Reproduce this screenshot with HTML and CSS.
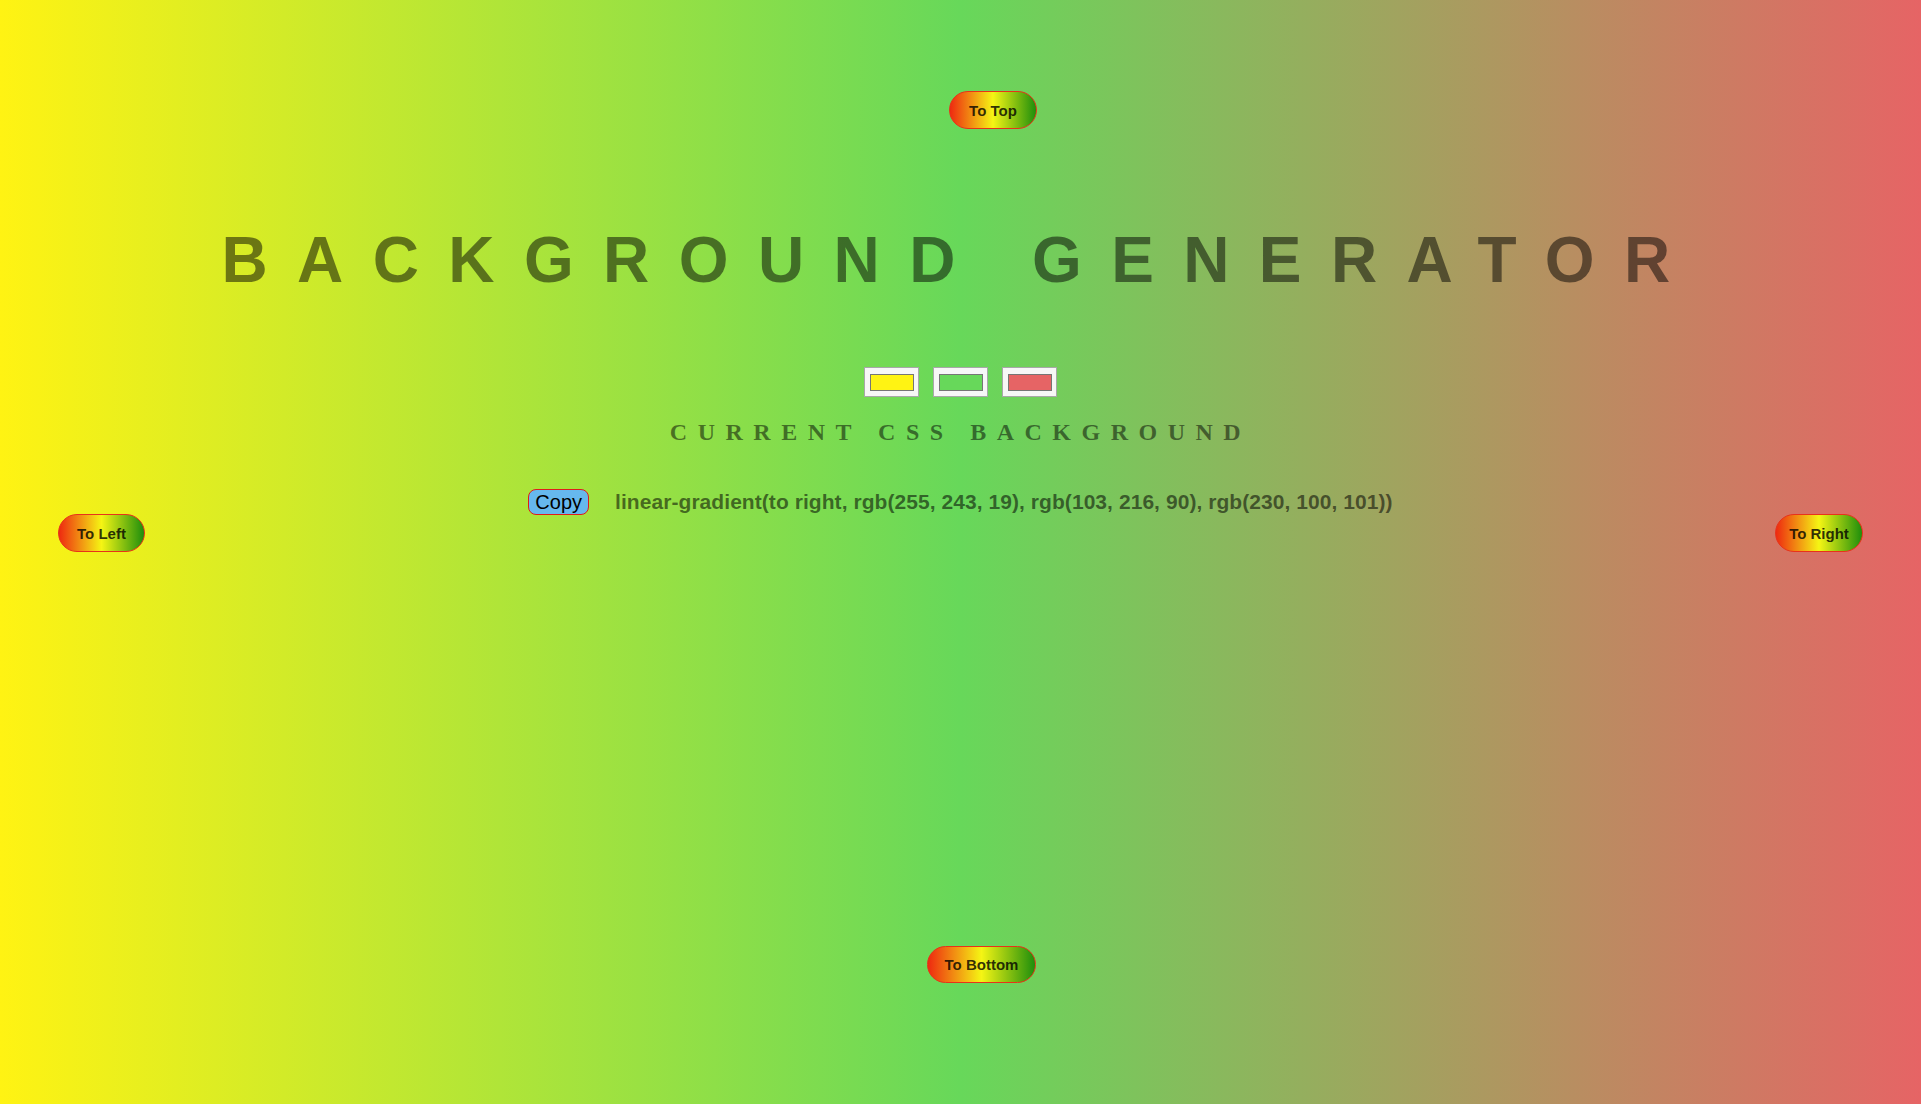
FILE: index.html
```html
<!DOCTYPE html>
<html lang="en">
<head>
<meta charset="utf-8">
<title>Background Generator</title>
<link rel="stylesheet" href="styles.css">
</head>
<body class="page">
  <div class="vnav vnav-top">
    <button class="dir-btn dir-top" type="button">To Top</button>
  </div>

  <h1 class="title">BACKGROUND GENERATOR</h1>

  <div class="swatches">
    <input class="swatch" type="color" value="#fff313">
    <input class="swatch" type="color" value="#67d85a">
    <input class="swatch" type="color" value="#e66465">
  </div>

  <h3 class="subtitle">CURRENT CSS BACKGROUND</h3>

  <div class="copy-row">
    <button class="copy-btn" type="button">Copy</button>
    <span class="css-value">linear-gradient(to right, rgb(255, 243, 19), rgb(103, 216, 90), rgb(230, 100, 101))</span>
  </div>

  <div class="hnav">
    <button class="dir-btn dir-left" type="button">To Left</button>
    <button class="dir-btn dir-right" type="button">To Right</button>
  </div>

  <div class="vnav vnav-bottom">
    <button class="dir-btn dir-bottom" type="button">To Bottom</button>
  </div>
</body>
</html>
```
FILE: styles.css
```css
html, body {
  margin: 0;
  padding: 0;
}

.page {
  min-height: 1104px;
  box-sizing: border-box;
  background: linear-gradient(to right, rgb(255, 243, 19), rgb(103, 216, 90), rgb(230, 100, 101));
  display: flex;
  flex-direction: column;
  align-items: center;
  font-family: "Liberation Sans", Arial, sans-serif;
}

.vnav {
  width: 153px;
  display: flex;
  justify-content: flex-end;
}

.vnav-top {
  padding-top: 91px;
}

.vnav-bottom {
  margin-top: 394px;
}

.dir-btn {
  box-sizing: border-box;
  height: 38px;
  padding: 0;
  border: 1px solid #e8321a;
  border-radius: 19px;
  background: linear-gradient(to right, #ee2a10, #f5f514, #1e8e0c);
  color: rgba(0, 0, 0, 0.8);
  font-family: "Liberation Sans", Arial, sans-serif;
  font-weight: bold;
  font-size: 15px;
  cursor: pointer;
}

.dir-top { width: 88px; }
.dir-left { width: 87px; }
.dir-right { width: 88px; }
.dir-bottom { width: 109px; height: 37px; margin-right: 1px; }

.title {
  margin: 99px 0 0 0;
  font-size: 64px;
  line-height: 64px;
  font-weight: bold;
  letter-spacing: 29.4px;
  color: rgba(0, 0, 0, 0.5);
  white-space: nowrap;
}

.swatches {
  margin-top: 75px;
  display: flex;
  gap: 14px;
}

.swatch {
  -webkit-appearance: none;
  appearance: none;
  box-sizing: border-box;
  width: 55px;
  height: 30px;
  margin: 0;
  padding: 0;
  border: 1px solid #a8a8a8;
  background: #f7f7f7;
  cursor: pointer;
}

.swatch::-webkit-color-swatch-wrapper {
  padding: 6px 4px 5px 5px;
}

.swatch::-webkit-color-swatch {
  border: 1px solid #767676;
  border-radius: 0;
}

.subtitle {
  margin: 23px 0 0 0;
  font-family: "Liberation Serif", "Times New Roman", serif;
  font-size: 24px;
  line-height: 24px;
  font-weight: bold;
  letter-spacing: 10.5px;
  color: rgba(0, 0, 0, 0.5);
}

.copy-row {
  margin-top: 45px;
  display: flex;
  align-items: baseline;
  gap: 26px;
}

.copy-btn {
  font-family: "Liberation Sans", Arial, sans-serif;
  font-size: 20px;
  height: 26px;
  line-height: 22px;
  padding: 1px 6px;
  border: 1px solid #e01b1b;
  border-radius: 8px;
  background: #66b8ee;
  color: #000;
  cursor: pointer;
}

.css-value {
  font-size: 21px;
  font-weight: bold;
  letter-spacing: 0.06px;
  color: rgba(0, 0, 0, 0.55);
}

.hnav {
  align-self: stretch;
  margin-top: -1px;
  padding: 0 58px;
  display: flex;
  justify-content: space-between;
}
```
